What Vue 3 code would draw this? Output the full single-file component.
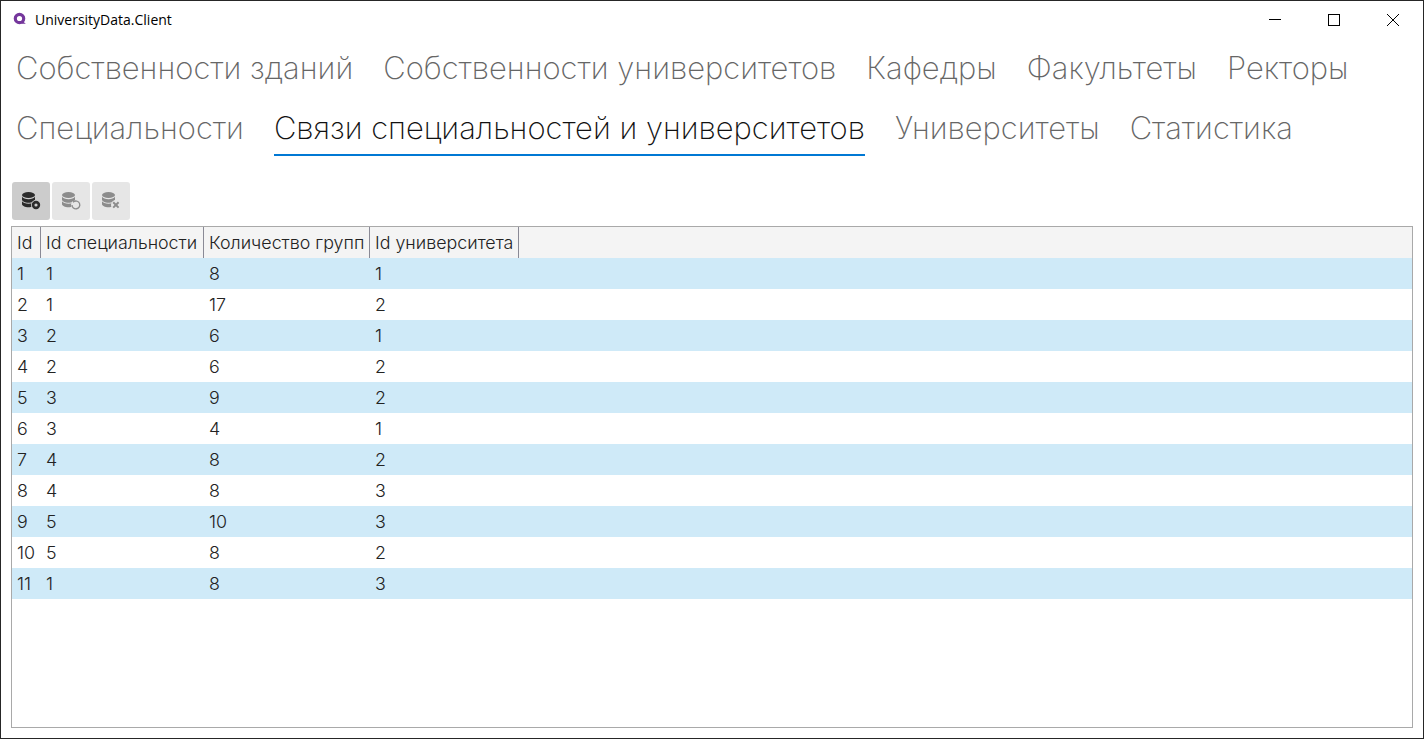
<template>
  <div class="window">
    <div class="titlebar">
      <svg class="app-icon" width="14" height="14" viewBox="0 0 14 14">
        <circle cx="6.500" cy="6.500" r="4.200" fill="none" stroke="#75379c" stroke-width="3.200" />
        <path d="M9.500 9L12.800 11.800H8.500z" fill="#75379c" />
      </svg>
      <span class="app-title">UniversityData.Client</span>
      <div class="window-buttons">
        <div class="win-btn">
          <svg width="12" height="12" viewBox="0 0 12 12"><path d="M0 5.500H12" stroke="#000" fill="none" /></svg>
        </div>
        <div class="win-btn">
          <svg width="12" height="12" viewBox="0 0 12 12"><rect x="0.500" y="0.500" width="11" height="11" stroke="#000" fill="none" /></svg>
        </div>
        <div class="win-btn">
          <svg width="12" height="12" viewBox="0 0 12 12"><path d="M0 0L12 12M12 0L0 12" stroke="#000" fill="none" /></svg>
        </div>
      </div>
    </div>

    <div class="tabs">
      <div
        v-for="tab in tabs"
        :key="tab"
        class="tab"
        :class="{ active: tab === activeTab }"
      >
        {{ tab }}
      </div>
    </div>

    <div class="toolbar">
      <button
        v-for="tool in tools"
        :key="tool.kind"
        class="tool-btn"
        :class="{ pressed: tool.kind === 'add' }"
      >
        <svg width="20" height="20" viewBox="0 0 20 20" :fill="tool.color">
          <ellipse cx="7.500" cy="4" rx="6.500" ry="3" />
          <path d="M1 5.800v3c0 1.500 3 3 6.500 3s6.500-1.500 6.500-3v-3c-1 1.600-3.500 2.400-6.500 2.400S2 7.400 1 5.800z" />
          <path d="M1 10.300v3c0 1.500 3 3 6.500 3s6.500-1.500 6.500-3v-3c-1 1.600-3.500 2.400-6.500 2.400S2 11.900 1 10.300z" />
          <circle cx="15" cy="14" r="5" :fill="tool.bg" />
          <circle v-if="tool.kind === 'add'" cx="15" cy="14" r="2.900" fill="none" :stroke="tool.color" stroke-width="2.600" />
          <template v-if="tool.kind === 'refresh'">
            <path d="M13 10.500a3.900 3.900 0 1 1-2 3.400" fill="none" :stroke="tool.color" stroke-width="1.300" />
            <path d="M11.300 8.800l3.200.9-2 2.300z" />
          </template>
          <path v-if="tool.kind === 'delete'" d="M12.200 11.200l5.400 5.400M17.600 11.200l-5.400 5.400" fill="none" :stroke="tool.color" stroke-width="2" />
        </svg>
      </button>
    </div>

    <div class="grid">
      <div class="grid-row grid-head">
        <div v-for="col in columns" :key="col.title" class="cell" :style="{ width: col.width + 'px' }">{{ col.title }}</div>
      </div>
      <div v-for="(row, i) in rows" :key="row[0]" class="grid-row" :class="{ odd: i % 2 === 0 }">
        <div v-for="(value, j) in row" :key="j" class="cell" :style="{ width: columns[j].width + 'px' }">{{ value }}</div>
      </div>
    </div>
  </div>
</template>

<script setup>
const tabs = [
  'Собственности зданий',
  'Собственности университетов',
  'Кафедры',
  'Факультеты',
  'Ректоры',
  'Специальности',
  'Связи специальностей и университетов',
  'Университеты',
  'Статистика'
]
const activeTab = 'Связи специальностей и университетов'

const tools = [
  { kind: 'add', color: '#2b2b2b', bg: '#ccc' },
  { kind: 'refresh', color: '#8c8c8c', bg: '#e6e6e6' },
  { kind: 'delete', color: '#8c8c8c', bg: '#e6e6e6' }
]

const columns = [
  { title: 'Id', width: 29 },
  { title: 'Id специальности', width: 163 },
  { title: 'Количество групп', width: 166 },
  { title: 'Id университета', width: 149 }
]

const rows = [
  [1, 1, 8, 1],
  [2, 1, 17, 2],
  [3, 2, 6, 1],
  [4, 2, 6, 2],
  [5, 3, 9, 2],
  [6, 3, 4, 1],
  [7, 4, 8, 2],
  [8, 4, 8, 3],
  [9, 5, 10, 3],
  [10, 5, 8, 2],
  [11, 1, 8, 3]
]
</script>

<style>
html, body {
  margin: 0;
  background: #fff;
}
</style>

<style scoped>
.window {
  box-sizing: border-box;
  width: 1424px;
  height: 739px;
  border: 1px solid #262626;
  background: #fff;
  display: flex;
  flex-direction: column;
  font-family: Inter, "Noto Sans", sans-serif;
  color: #222;
  overflow: hidden;
}

.titlebar {
  height: 36px;
  flex: none;
  display: flex;
  align-items: center;
  padding-left: 12px;
}

.app-icon {
  margin-right: 8px;
}

.app-title {
  font-family: "Open Sans", "Noto Sans", sans-serif;
  font-size: 14px;
  color: #000;
}

.window-buttons {
  margin-left: auto;
  display: flex;
  margin-right: 1px;
  margin-top: 1px;
}

.win-btn {
  width: 59px;
  height: 36px;
  display: flex;
  align-items: center;
  justify-content: center;
}

.tabs {
  display: flex;
  flex-wrap: wrap;
  column-gap: 30px;
  row-gap: 1px;
  padding: 0 15px;
  flex: none;
}

.tab {
  height: 59px;
  box-sizing: border-box;
  line-height: 62px;
  font-size: 30.950px;
  font-weight: 200;
  color: #666;
  white-space: nowrap;
}

.tab.active {
  color: #111;
  border-bottom: 2px solid #0078d4;
}

.toolbar {
  display: flex;
  gap: 2px;
  padding: 26px 0 0 11px;
  height: 38px;
  flex: none;
  box-sizing: content-box;
}

.tool-btn {
  width: 38px;
  height: 38px;
  padding: 0;
  border: 0;
  border-radius: 3px;
  background: #e6e6e6;
  display: flex;
  align-items: center;
  justify-content: center;
}

.tool-btn.pressed {
  background: #ccc;
}

.grid {
  margin: 6px 10px 10px 10px;
  flex: 1;
  border: 1px solid #a9a9a9;
  overflow: hidden;
}

.grid-row {
  display: flex;
  height: 31px;
}

.grid-head {
  background: #f4f4f4;
}

.grid-head .cell {
  border-right: 1px solid #8a8a96;
}

.grid-row.odd {
  background: #cfeaf8;
}

.cell {
  box-sizing: border-box;
  padding-left: 5px;
  line-height: 32px;
  font-size: 17.850px;
  font-weight: 300;
  color: #222;
  white-space: nowrap;
}
</style>
